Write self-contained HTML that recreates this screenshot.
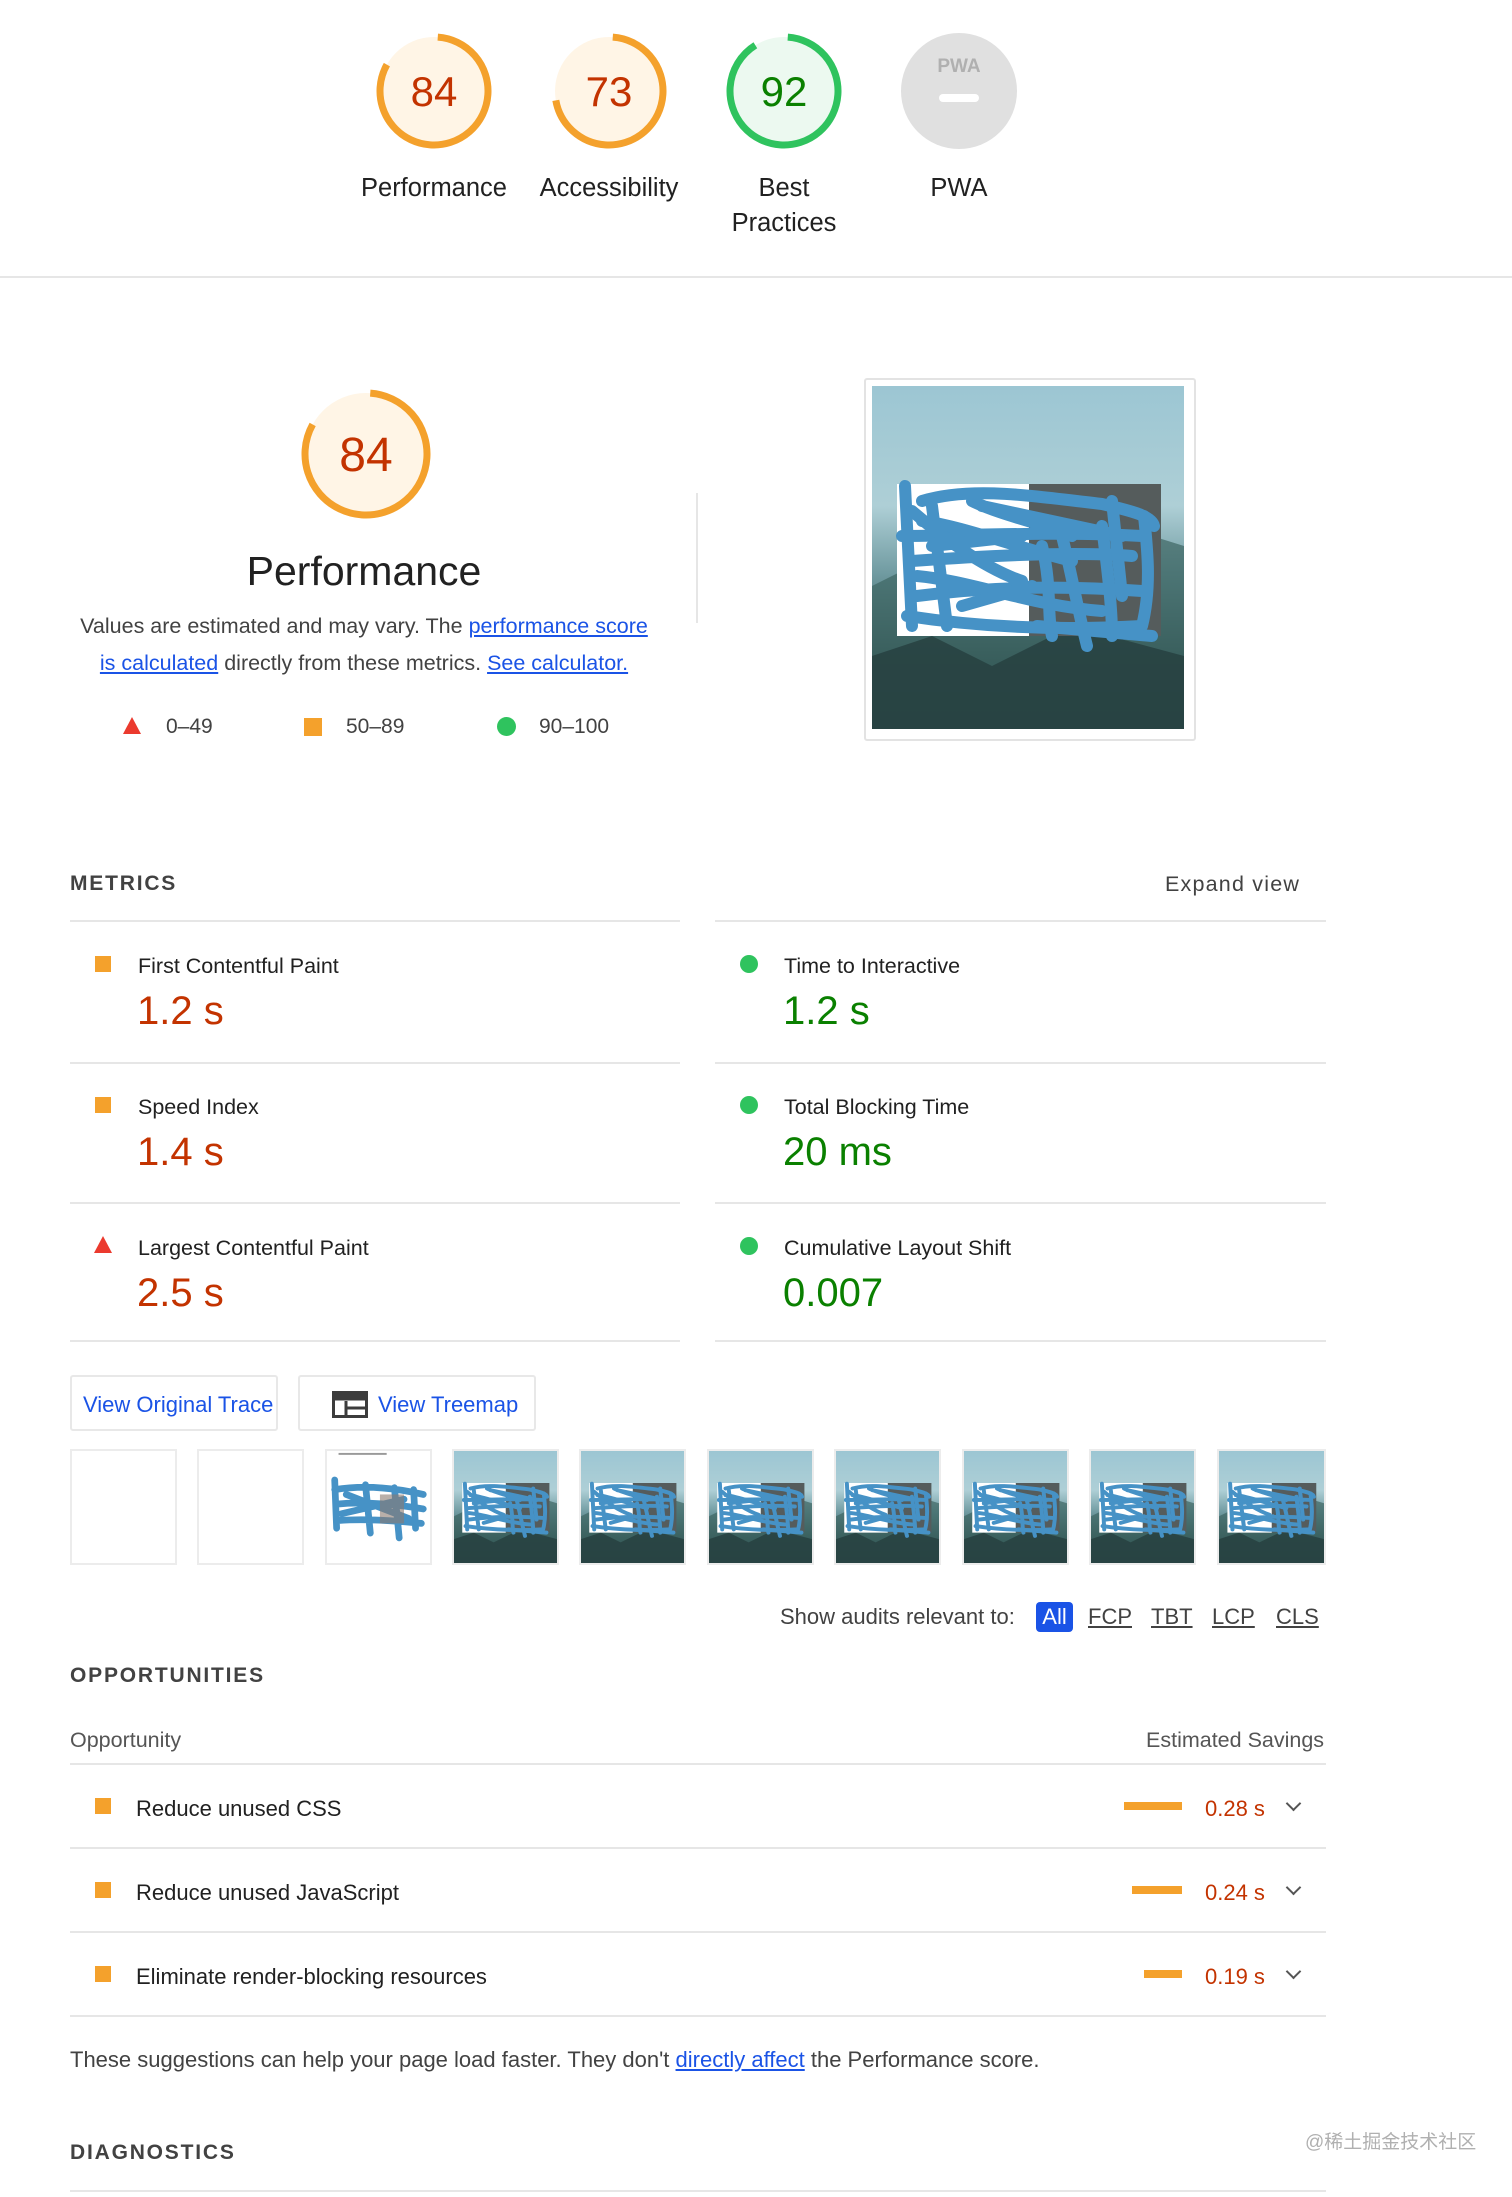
<!DOCTYPE html>
<html><head><meta charset="utf-8">
<style>
*{margin:0;padding:0;box-sizing:border-box}
body{width:1512px;height:2197px;background:#fff;font-family:"Liberation Sans",Arial,sans-serif;color:#212121;position:relative;overflow:hidden}
.a{position:absolute;white-space:nowrap}
.t3{transform:translateY(3px)}
.lbl{font-size:25.5px;color:#212121;text-align:center;width:200px;line-height:35px}
.hr{position:absolute;height:2px;background:#e6e6e6}
.mt{font-size:21.5px;color:#212121;line-height:24px}
.mv{font-size:40px;line-height:44px}
.or{color:#c33300}.gr{color:#0a8000}
.sq{position:absolute;width:16px;height:16px;background:#f4a12c}
.ci{position:absolute;width:18px;height:18px;border-radius:50%;background:#2fc35e}
.tri{position:absolute;width:0;height:0;border-left:9px solid transparent;border-right:9px solid transparent;border-bottom:17px solid #eb3a2e}
.hd{font-size:21px;letter-spacing:1.8px;color:#424242;font-weight:bold;line-height:24px}
a{color:#1a53e6;text-decoration:underline}
.btn{position:absolute;height:56px;border:2px solid #e8e8e8;border-radius:3px;color:#1a53e6;font-size:22px;line-height:56px}
.th{position:absolute;top:1449px;width:107px;height:116px;border:2px solid #ececec;background:#fff;overflow:hidden}
.th svg{width:100%;height:100%;display:block}
.ot{font-size:22px;color:#212121;line-height:24px}
.bar{position:absolute;height:8px;background:#f4a12c}
.sv{font-size:22px;color:#c33300;line-height:24px}
.chev{position:absolute;width:11px;height:11px;border-right:2px solid #555;border-bottom:2px solid #555;transform:rotate(45deg)}
.flt{font-size:22px;color:#424242;line-height:26px;text-decoration:underline}
</style></head><body>
<svg width="0" height="0" style="position:absolute">
<defs>
<linearGradient id="sky" x1="0" y1="0" x2="0" y2="1">
<stop offset="0" stop-color="#9cc6d3"/><stop offset="0.35" stop-color="#aecfd6"/><stop offset="0.55" stop-color="#6f9aa0"/><stop offset="0.8" stop-color="#2f4e4e"/><stop offset="1" stop-color="#1e3535"/></linearGradient>
<symbol id="shot" viewBox="0 0 312 343" preserveAspectRatio="none">
<rect width="312" height="343" fill="url(#sky)"/>
<path d="M0 200 L40 180 L90 210 L150 170 L220 200 L280 150 L312 160 L312 343 L0 343Z" fill="#3d6563" opacity="0.7"/>
<path d="M0 270 L60 250 L120 280 L200 240 L312 270 L312 343 L0 343Z" fill="#253f3f" opacity="0.8"/>
<rect x="25" y="98" width="132" height="152" fill="#fff"/>
<rect x="157" y="98" width="132" height="152" fill="#555c5c"/>
<g fill="none" stroke="#4692c6" stroke-width="12" stroke-linecap="round" stroke-linejoin="round">
<path d="M33 100 L40 240 M50 115 C100 100 160 110 230 118 C260 125 280 130 282 140"/>
<path d="M30 150 C90 150 180 145 270 150 M40 175 C110 170 200 165 260 170 M45 210 C120 200 200 200 270 205"/>
<path d="M60 120 L75 240 M100 115 C130 130 180 140 200 150 M110 120 L250 150"/>
<path d="M35 230 C100 240 180 245 270 240 C280 200 275 160 272 130"/>
<path d="M190 150 C200 190 205 220 215 260 M230 140 C235 180 240 220 240 250 M170 160 C180 200 175 230 180 250"/>
<path d="M50 135 C90 140 140 160 200 175 M45 190 C100 195 160 220 230 225"/>
<path d="M240 115 L250 210 M165 240 L280 250 M40 125 C80 160 120 185 150 195 M60 160 L150 150 M90 220 L160 200"/>
</g>
</symbol>
</defs></svg>

<!-- top gauges -->
<svg class="a" style="left:374px;top:31px" width="120" height="120" viewBox="0 0 120 120"><circle cx="60" cy="60" r="54" fill="#fff5e6"/><circle cx="60" cy="60" r="54" fill="none" stroke="#f4a12c" stroke-width="7" stroke-dasharray="278 400" transform="rotate(-86 60 60)"/><text x="60" y="75" font-size="42" text-anchor="middle" fill="#c33300" font-family="Liberation Sans">84</text></svg>
<svg class="a" style="left:549px;top:31px" width="120" height="120" viewBox="0 0 120 120"><circle cx="60" cy="60" r="54" fill="#fff5e6"/><circle cx="60" cy="60" r="54" fill="none" stroke="#f4a12c" stroke-width="7" stroke-dasharray="241 400" transform="rotate(-86 60 60)"/><text x="60" y="75" font-size="42" text-anchor="middle" fill="#c33300" font-family="Liberation Sans">73</text></svg>
<svg class="a" style="left:724px;top:31px" width="120" height="120" viewBox="0 0 120 120"><circle cx="60" cy="60" r="54" fill="#ecf9f0"/><circle cx="60" cy="60" r="54" fill="none" stroke="#2fc35e" stroke-width="7" stroke-dasharray="305 400" transform="rotate(-86 60 60)"/><text x="60" y="75" font-size="42" text-anchor="middle" fill="#0a8000" font-family="Liberation Sans">92</text></svg>
<svg class="a" style="left:899px;top:31px" width="120" height="120" viewBox="0 0 120 120"><circle cx="60" cy="60" r="58" fill="#e0e0e0"/><text x="60" y="41" font-size="19" font-weight="bold" text-anchor="middle" fill="#b0b0b0" font-family="Liberation Sans">PWA</text><rect x="40" y="63" width="40" height="8" rx="4" fill="#fff"/></svg>
<div class="a lbl t3" style="left:334px;top:168px">Performance</div>
<div class="a lbl t3" style="left:509px;top:168px">Accessibility</div>
<div class="a lbl t3" style="left:684px;top:168px">Best<br>Practices</div>
<div class="a lbl t3" style="left:859px;top:168px">PWA</div>
<div class="hr" style="left:0;top:276px;width:1512px"></div>

<!-- perf summary -->
<svg class="a" style="left:300px;top:388px" width="132" height="132" viewBox="0 0 132 132"><circle cx="66" cy="66" r="61" fill="#fff5e6"/><circle cx="66" cy="66" r="61" fill="none" stroke="#f4a12c" stroke-width="7" stroke-dasharray="314 500" transform="rotate(-86 66 66)"/><text x="66" y="83" font-size="48" text-anchor="middle" fill="#c33300" font-family="Liberation Sans">84</text></svg>
<div class="a" style="left:164px;top:548px;width:400px;text-align:center;font-size:41px;line-height:46px;color:#212121">Performance</div>
<div class="a" style="left:64px;top:608px;width:600px;text-align:center;font-size:21.5px;line-height:37px;color:#424242;white-space:normal">Values are estimated and may vary. The <a>performance score<br>is calculated</a> directly from these metrics. <a>See calculator.</a></div>
<div class="tri" style="left:123px;top:717px"></div>
<div class="a" style="left:166px;top:715px;font-size:21px;color:#424242">0–49</div>
<div class="sq" style="left:304px;top:718px;width:18px;height:18px"></div>
<div class="a" style="left:346px;top:715px;font-size:21px;color:#424242">50–89</div>
<div class="ci" style="left:497px;top:717px;width:19px;height:19px"></div>
<div class="a" style="left:539px;top:715px;font-size:21px;color:#424242">90–100</div>
<div class="a" style="left:696px;top:493px;width:2px;height:130px;background:#e6e6e6"></div>
<div class="a" style="left:864px;top:378px;width:332px;height:363px;border:2px solid #e3e3e3;border-radius:3px;background:#fff"></div>
<svg class="a" style="left:872px;top:386px" width="312" height="343"><use href="#shot" width="312" height="343"/></svg>

<!-- metrics -->
<div class="a hd t3" style="left:70px;top:869px">METRICS</div>
<div class="a t3" style="left:1165px;top:869px;font-size:21.5px;letter-spacing:1.2px;color:#424242;line-height:24px">Expand view</div>
<div class="hr" style="left:70px;top:920px;width:610px"></div><div class="hr" style="left:715px;top:920px;width:611px"></div>
<div class="hr" style="left:70px;top:1062px;width:610px"></div><div class="hr" style="left:715px;top:1062px;width:611px"></div>
<div class="hr" style="left:70px;top:1202px;width:610px"></div><div class="hr" style="left:715px;top:1202px;width:611px"></div>
<div class="hr" style="left:70px;top:1340px;width:610px"></div><div class="hr" style="left:715px;top:1340px;width:611px"></div>

<div class="sq" style="left:95px;top:956px"></div>
<div class="a mt t3" style="left:138px;top:951px">First Contentful Paint</div>
<div class="a mv or" style="left:137px;top:989px">1.2 s</div>
<div class="ci" style="left:740px;top:955px"></div>
<div class="a mt t3" style="left:784px;top:951px">Time to Interactive</div>
<div class="a mv gr" style="left:783px;top:989px">1.2 s</div>

<div class="sq" style="left:95px;top:1097px"></div>
<div class="a mt t3" style="left:138px;top:1092px">Speed Index</div>
<div class="a mv or" style="left:137px;top:1130px">1.4 s</div>
<div class="ci" style="left:740px;top:1096px"></div>
<div class="a mt t3" style="left:784px;top:1092px">Total Blocking Time</div>
<div class="a mv gr" style="left:783px;top:1130px">20 ms</div>

<div class="tri" style="left:94px;top:1236px"></div>
<div class="a mt t3" style="left:138px;top:1233px">Largest Contentful Paint</div>
<div class="a mv or" style="left:137px;top:1271px">2.5 s</div>
<div class="ci" style="left:740px;top:1237px"></div>
<div class="a mt t3" style="left:784px;top:1233px">Cumulative Layout Shift</div>
<div class="a mv gr" style="left:783px;top:1271px">0.007</div>

<!-- buttons -->
<div class="btn" style="left:70px;top:1375px;width:208px;padding-left:11px">View Original Trace</div>
<div class="btn" style="left:298px;top:1375px;width:238px;padding-left:78px">View Treemap</div>
<svg class="a" style="left:332px;top:1391px" width="36" height="27" viewBox="0 0 36 27"><rect x="1.5" y="1.5" width="33" height="24" fill="none" stroke="#3c3c3c" stroke-width="3"/><rect x="1.5" y="1.5" width="33" height="8" fill="#3c3c3c"/><line x1="14" y1="10" x2="14" y2="25" stroke="#3c3c3c" stroke-width="3"/><line x1="14" y1="17" x2="34" y2="17" stroke="#3c3c3c" stroke-width="3"/></svg>

<!-- filmstrip -->
<div class="th" style="left:70px"></div>
<div class="th" style="left:197px"></div>
<div class="th" style="left:325px"><svg viewBox="0 0 107 116" preserveAspectRatio="none"><rect width="107" height="116" fill="#fff"/><rect x="12" y="2" width="50" height="2" fill="#999"/><g fill="none" stroke="#4692c6" stroke-width="7" stroke-linecap="round"><path d="M8 30 L10 80 M8 40 C40 35 70 38 100 45 M10 55 C40 52 70 55 100 60 M12 72 C40 70 70 72 98 75 M40 35 L45 85 M70 38 L75 90 M90 40 L92 80 M20 45 L85 70 M15 65 L80 50"/></g><rect x="55" y="45" width="25" height="30" fill="#8a7a70" opacity="0.6"/></svg></div>
<div class="th" style="left:452px"><svg><use href="#shot" width="100%" height="100%"/></svg></div>
<div class="th" style="left:579px"><svg><use href="#shot" width="100%" height="100%"/></svg></div>
<div class="th" style="left:707px"><svg><use href="#shot" width="100%" height="100%"/></svg></div>
<div class="th" style="left:834px"><svg><use href="#shot" width="100%" height="100%"/></svg></div>
<div class="th" style="left:962px"><svg><use href="#shot" width="100%" height="100%"/></svg></div>
<div class="th" style="left:1089px"><svg><use href="#shot" width="100%" height="100%"/></svg></div>
<div class="th" style="left:1217px;width:109px"><svg><use href="#shot" width="100%" height="100%"/></svg></div>

<!-- filter -->
<div class="a" style="left:780px;top:1604px;font-size:22px;color:#424242;line-height:26px">Show audits relevant to:</div>
<div class="a" style="left:1036px;top:1602px;width:37px;height:30px;background:#1a53e6;border-radius:4px;color:#fff;font-size:22px;line-height:30px;text-align:center">All</div>
<div class="a flt" style="left:1088px;top:1604px">FCP</div>
<div class="a flt" style="left:1151px;top:1604px">TBT</div>
<div class="a flt" style="left:1212px;top:1604px">LCP</div>
<div class="a flt" style="left:1276px;top:1604px">CLS</div>

<!-- opportunities -->
<div class="a hd t3" style="left:70px;top:1661px">OPPORTUNITIES</div>
<div class="a t3" style="left:70px;top:1725px;font-size:21.5px;color:#555;line-height:24px">Opportunity</div>
<div class="a t3" style="left:1146px;top:1725px;font-size:21.5px;color:#555;line-height:24px">Estimated Savings</div>
<div class="hr" style="left:70px;top:1763px;width:1256px"></div>
<div class="hr" style="left:70px;top:1847px;width:1256px"></div>
<div class="hr" style="left:70px;top:1931px;width:1256px"></div>
<div class="hr" style="left:70px;top:2015px;width:1256px"></div>

<div class="sq" style="left:95px;top:1798px"></div>
<div class="a ot t3" style="left:136px;top:1794px">Reduce unused CSS</div>
<div class="bar" style="left:1124px;top:1802px;width:58px"></div>
<div class="a sv t3" style="left:1205px;top:1794px">0.28 s</div>
<div class="chev" style="left:1288px;top:1798px"></div>

<div class="sq" style="left:95px;top:1882px"></div>
<div class="a ot t3" style="left:136px;top:1878px">Reduce unused JavaScript</div>
<div class="bar" style="left:1132px;top:1886px;width:50px"></div>
<div class="a sv t3" style="left:1205px;top:1878px">0.24 s</div>
<div class="chev" style="left:1288px;top:1882px"></div>

<div class="sq" style="left:95px;top:1966px"></div>
<div class="a ot t3" style="left:136px;top:1962px">Eliminate render-blocking resources</div>
<div class="bar" style="left:1144px;top:1970px;width:38px"></div>
<div class="a sv t3" style="left:1205px;top:1962px">0.19 s</div>
<div class="chev" style="left:1288px;top:1966px"></div>

<div class="a t3" style="left:70px;top:2044px;font-size:22px;color:#424242;line-height:26px">These suggestions can help your page load faster. They don't <a>directly affect</a> the Performance score.</div>

<div class="a hd t3" style="left:70px;top:2138px">DIAGNOSTICS</div>
<div class="a" style="left:1305px;top:2131px;font-size:19px;color:#b0b0b0;line-height:24px;font-family:'Liberation Sans','Noto Sans CJK SC',sans-serif">@稀土掘金技术社区</div>
<div class="hr" style="left:70px;top:2190px;width:1256px"></div>
</body></html>
